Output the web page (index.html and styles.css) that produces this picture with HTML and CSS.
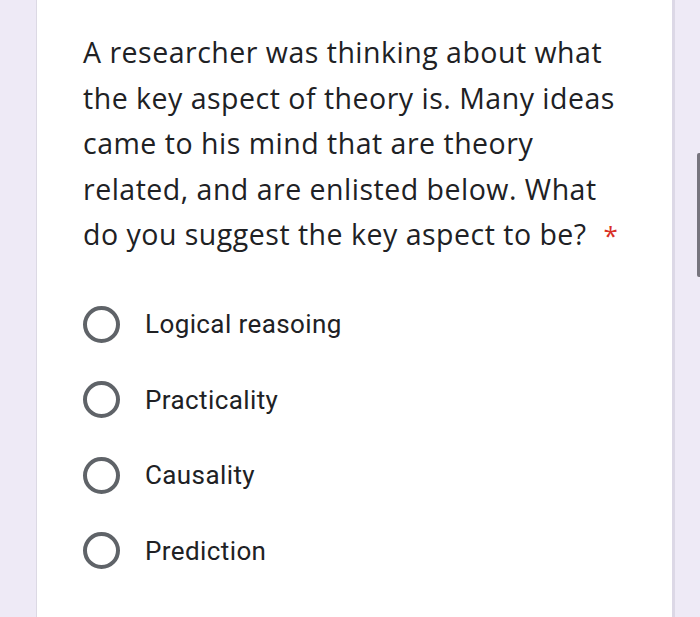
FILE: index.html
```html
<!DOCTYPE html>
<html>
<head>
<meta charset="utf-8">
<link rel="stylesheet" href="styles.css">
</head>
<body>
<div class="page">
  <div class="card">
    <div class="question">A researcher was thinking about what<br>the key aspect of theory is. Many ideas<br>came to his mind that are theory<br>related, and are enlisted below. What<br>do you suggest the key aspect to be? <span class="req">*</span></div>
    <div class="options">
      <div class="option"><span class="radio"></span><span class="label">Logical reasoing</span></div>
      <div class="option"><span class="radio"></span><span class="label">Practicality</span></div>
      <div class="option"><span class="radio"></span><span class="label">Causality</span></div>
      <div class="option"><span class="radio"></span><span class="label">Prediction</span></div>
    </div>
  </div>
  <div class="scrollbar"></div>
</div>
</body>
</html>
```
FILE: styles.css
```css
html, body {
  margin: 0;
  padding: 0;
  height: 100%;
  background: #eeeaf6;
  overflow: hidden;
}
.page {
  position: relative;
  height: 617px;
}
.card {
  margin-left: 36px;
  width: 639px;
  height: 617px;
  background: #fff;
  border-left: 1px solid #dcd9e4;
  border-right: 3px solid #dcd8e6;
  box-sizing: border-box;
  padding: 30px 10px 0 46px;
}
.question {
  font-family: "Open Sans", "Liberation Sans", sans-serif;
  font-size: 28.5px;
  letter-spacing: 0.5px;
  line-height: 45.5px;
  color: #202124;
  white-space: nowrap;
}
.req {
  color: #d93025;
  font-size: 26px;
  margin-left: 9px;
}
.options {
  display: flex;
  flex-direction: column;
  margin-top: 28px;
}
.option {
  display: flex;
  align-items: center;
  height: 75.5px;
}
.radio {
  width: 37px;
  height: 37px;
  box-sizing: border-box;
  border: 4px solid #5f6368;
  border-radius: 50%;
  flex: none;
}
.label {
  margin-left: 25px;
  font-family: Roboto, "Liberation Sans", sans-serif;
  font-size: 26px;
  letter-spacing: 0.4px;
  color: #202124;
}
.scrollbar {
  position: absolute;
  right: 0;
  top: 153px;
  width: 3px;
  height: 124px;
  background: #77757e;
  border-radius: 2px 0 0 2px;
}
```
